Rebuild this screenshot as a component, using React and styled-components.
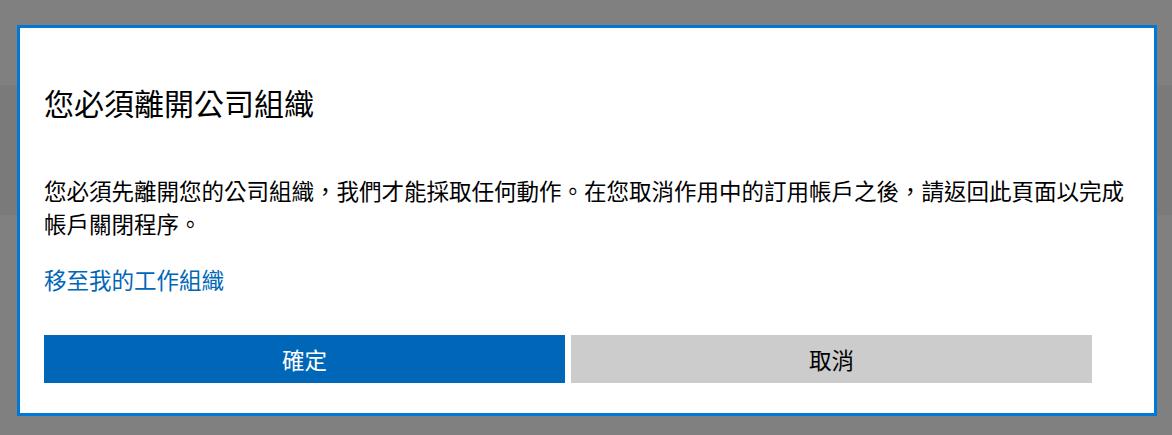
import React from "react";
import styled, { createGlobalStyle } from "styled-components";

const GlobalStyle = createGlobalStyle`
  html, body {
    margin: 0;
    padding: 0;
  }
  body {
    font-family: "Noto Sans CJK TC", "Noto Sans", sans-serif;
    color: #000;
  }
`;

const Backdrop = styled.div`
  width: 1172px;
  height: 435px;
  box-sizing: border-box;
  padding: 25px 15px 0 17px;
  background: linear-gradient(
    to bottom,
    #808080 0,
    #808080 85px,
    #7a7a7a 85px,
    #7a7a7a 215px,
    #808080 215px
  );
`;

const Dialog = styled.div`
  width: 1140px;
  box-sizing: border-box;
  background: #fff;
  border: 3px solid #0078d7;
  padding: 54px 24px 30px;
  display: flex;
  flex-direction: column;
`;

const Title = styled.h1`
  margin: 0;
  font-size: 30px;
  line-height: 40px;
  font-weight: 400;
`;

const Message = styled.p`
  margin: 52px 0 0;
  font-size: 22.5px;
  line-height: 33px;
`;

const OrgLink = styled.a`
  margin-top: 23px;
  font-size: 22.5px;
  line-height: 33px;
  color: #0067b8;
  text-decoration: none;
  align-self: flex-start;
  cursor: pointer;
`;

const ButtonRow = styled.div`
  margin-top: 39px;
  width: 1048px;
  display: grid;
  grid-template-columns: 1fr 1fr;
  gap: 6px;
`;

const Button = styled.button`
  height: 48px;
  border: none;
  margin: 0;
  padding: 0;
  font-family: inherit;
  font-size: 22.5px;
  background: ${(p) => (p.$primary ? "#0067b8" : "#cccccc")};
  color: ${(p) => (p.$primary ? "#fff" : "#000")};
  cursor: pointer;
`;

export default function App() {
  return (
    <>
      <GlobalStyle />
      <Backdrop>
        <Dialog role="dialog">
          <Title>您必須離開公司組織</Title>
          <Message>
            您必須先離開您的公司組織，我們才能採取任何動作。在您取消作用中的訂用帳戶之後，請返回此頁面以完成帳戶關閉程序。
          </Message>
          <OrgLink>移至我的工作組織</OrgLink>
          <ButtonRow>
            <Button $primary>確定</Button>
            <Button>取消</Button>
          </ButtonRow>
        </Dialog>
      </Backdrop>
    </>
  );
}
